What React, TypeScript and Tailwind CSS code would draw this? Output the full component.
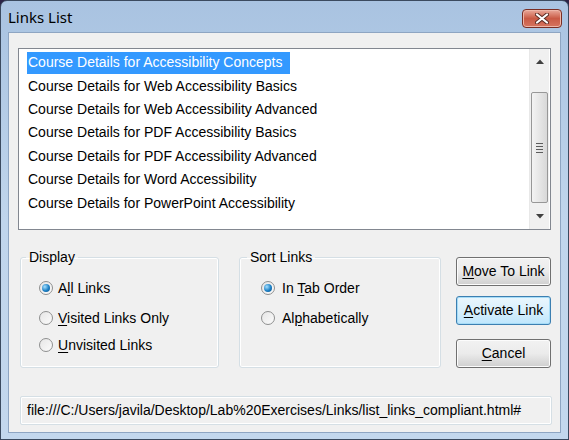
import React from 'react';

const items = [
  'Course Details for Accessibility Concepts',
  'Course Details for Web Accessibility Basics',
  'Course Details for Web Accessibility Advanced',
  'Course Details for PDF Accessibility Basics',
  'Course Details for PDF Accessibility Advanced',
  'Course Details for Word Accessibility',
  'Course Details for PowerPoint Accessibility',
];

const Radio: React.FC<{ checked?: boolean }> = ({ checked }) => (
  <span className="relative w-[14px] h-[14px] rounded-full border border-[#8e8f8f] bg-gradient-to-br from-[#e6e6e6] to-[#fbfbfb] flex items-center justify-center shrink-0">
    {checked && (
      <span className="w-[8px] h-[8px] rounded-full bg-[radial-gradient(circle_at_35%_35%,#a6e0ff,#1b7fc4_55%,#0b4f86)]" />
    )}
  </span>
);

const Key: React.FC<{ children: React.ReactNode }> = ({ children }) => (
  <span className="underline underline-offset-[2px]">{children}</span>
);

const RadioRow: React.FC<{ checked?: boolean; className?: string; children: React.ReactNode }> = ({
  checked,
  className,
  children,
}) => (
  <div className={`flex items-center gap-[5px] h-[20px] ${className ?? ''}`}>
    <Radio checked={checked} />
    <span>{children}</span>
  </div>
);

const WinButton: React.FC<{ focused?: boolean; className?: string; children: React.ReactNode }> = ({
  focused,
  className,
  children,
}) => (
  <button
    className={`w-[95px] h-[29px] rounded-[3px] border flex items-center justify-center bg-gradient-to-b ${
      focused
        ? 'border-[#3c7fb1] from-[#eaf6fd] via-[#d9f0fc] to-[#bee6fd] shadow-[inset_0_0_0_1px_#a6dcf7]'
        : 'border-[#707070] from-[#f2f2f2] via-[#ebebeb] to-[#cfcfcf] shadow-[inset_0_0_0_1px_#fcfcfc]'
    } ${className ?? ''}`}
  >
    {children}
  </button>
);

export default function App() {
  return (
    <div className="w-[569px] h-[440px] bg-[#2c2447] font-['Liberation_Sans',Arial,sans-serif] text-[14px] text-black">
      <div className="w-full h-full rounded-t-[7px] border border-[#3b4a5f] bg-gradient-to-b from-[#a9c3e1] via-[#c0d5ec] to-[#c3d7ed] flex flex-col">
        {/* Title bar */}
        <div className="h-[31px] flex items-start justify-between pl-[7px] pr-[6px]">
          <span className="mt-[6px] font-['Noto_Sans',sans-serif] text-[15px] text-black leading-[20px]">Links List</span>
          <div className="mt-[8px] w-[40px] h-[19px] rounded-[4px] border border-[#7a2e24] bg-gradient-to-b from-[#e9a99b] via-[#c95a45] to-[#d6745f] flex items-center justify-center shadow-[inset_0_0_0_1px_#eeb6a8]">
            <svg width="14" height="11" viewBox="0 0 14 11">
              <path d="M2 1.5 L12 9.5 M12 1.5 L2 9.5" stroke="#5a2a22" strokeWidth="4" strokeLinecap="round" />
              <path d="M2 1.5 L12 9.5 M12 1.5 L2 9.5" stroke="#ffffff" strokeWidth="2.2" strokeLinecap="round" />
            </svg>
          </div>
        </div>

        {/* Client area */}
        <div className="flex-1 mx-[7px] mb-[6px] bg-[#f0f0f0] border border-[#8ea5c2] px-[9px] pt-[15px] pb-[7px] flex flex-col">
          {/* List box */}
          <div className="h-[182px] border border-[#828790] bg-white flex">
            <div className="flex-1 pl-[8px] pt-[2px]">
              {items.map((t, i) => (
                <div key={t} className="h-[23.4px] flex items-center">
                  <span
                    className={`h-[22px] flex items-center pl-[1px] pr-[8px] ${
                      i === 0 ? 'bg-[#3399ff] text-white' : ''
                    }`}
                  >
                    {t}
                  </span>
                </div>
              ))}
            </div>
            {/* Scrollbar */}
            <div className="w-[20px] mr-[1px] bg-[#f0f0f0] border-l border-[#e8e8e8] flex flex-col">
              <div className="h-[25px] flex items-center justify-center">
                <svg width="8" height="5" viewBox="0 0 8 5">
                  <path d="M0 5 L4 0.5 L8 5 Z" fill="#404040" />
                </svg>
              </div>
              <div className="h-[18px]" />
              <div className="h-[111px] mx-[1px] rounded-[2px] border border-[#979797] bg-gradient-to-r from-[#f3f3f3] via-[#e6e6e6] to-[#d8d8d8] flex items-center justify-center">
                <div className="flex flex-col gap-[2px]">
                  <span className="w-[7px] h-[1px] bg-[#5c5c5c]" />
                  <span className="w-[7px] h-[1px] bg-[#5c5c5c]" />
                  <span className="w-[7px] h-[1px] bg-[#5c5c5c]" />
                  <span className="w-[7px] h-[1px] bg-[#5c5c5c]" />
                </div>
              </div>
              <div className="flex-1 flex items-center justify-center">
                <svg width="8" height="5" viewBox="0 0 8 5">
                  <path d="M0 0 L8 0 L4 4.5 Z" fill="#404040" />
                </svg>
              </div>
            </div>
          </div>

          {/* Options row */}
          <div className="mt-[19px] ml-[2px] flex items-start">
            <fieldset className="w-[199px] h-[119px] border border-[#d5dfe5] rounded-[3px] shadow-[inset_0_0_0_1px_#ffffff]">
              <legend className="ml-[5px] px-[3px] leading-[16px]">Display</legend>
              <div className="pl-[18px]">
                <RadioRow checked className="mt-[13px]">
                  A<Key>l</Key>l Links
                </RadioRow>
                <RadioRow className="mt-[10px]">
                  <Key>V</Key>isited Links Only
                </RadioRow>
                <RadioRow className="mt-[7px]">
                  <Key>U</Key>nvisited Links
                </RadioRow>
              </div>
            </fieldset>

            <fieldset className="ml-[20px] w-[202px] h-[119px] border border-[#d5dfe5] rounded-[3px] shadow-[inset_0_0_0_1px_#ffffff]">
              <legend className="ml-[7px] px-[3px] leading-[16px]">Sort Links</legend>
              <div className="pl-[21px]">
                <RadioRow checked className="mt-[13px] gap-[7px]">
                  In <Key>T</Key>ab Order
                </RadioRow>
                <RadioRow className="mt-[10px] gap-[7px]">
                  Al<Key>p</Key>habetically
                </RadioRow>
              </div>
            </fieldset>

            <div className="ml-[15px] mt-[8px] flex flex-col">
              <WinButton>
                <Key>M</Key>ove To Link
              </WinButton>
              <WinButton focused className="mt-[10px]">
                <Key>A</Key>ctivate Link
              </WinButton>
              <WinButton className="mt-[14px]">
                <Key>C</Key>ancel
              </WinButton>
            </div>
          </div>

          {/* Status */}
          <div className="mt-auto ml-[2px] mr-[-1px] h-[29px] border border-[#d5dfe5] rounded-[2px] shadow-[inset_0_0_0_1px_#ffffff] flex items-center pl-[6px]">
            file:///C:/Users/javila/Desktop/Lab%20Exercises/Links/list_links_compliant.html#
          </div>
        </div>
      </div>
    </div>
  );
}
